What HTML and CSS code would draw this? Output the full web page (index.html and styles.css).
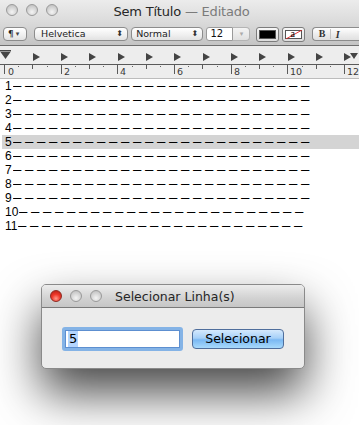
FILE: index.html
```html
<!DOCTYPE html>
<html>
<head>
<meta charset="utf-8">
<link rel="stylesheet" href="styles.css">
</head>
<body>
<div class="window">
  <div class="chrome">
    <div class="titlebar">
      <div class="lights">
        <span class="light gray"></span>
        <span class="light gray"></span>
        <span class="light gray"></span>
      </div>
      <div class="title">Sem Título <span class="dim">— Editado</span></div>
    </div>
    <div class="toolbar">
      <div class="ctl para">¶<span class="tri">▾</span></div>
      <div class="ctl popup font">Helvetica<span class="updown">⬍</span></div>
      <div class="ctl popup style">Normal<span class="updown">⬍</span></div>
      <div class="sizebox"><span class="size">12</span><span class="sizedrop">▾</span></div>
      <div class="well black"><span></span></div>
      <div class="well none"><span><svg width="20" height="10" viewBox="0 0 20 10"><line x1="1" y1="10" x2="19" y2="0" stroke="#e02020" stroke-width="1"/></svg><i>a</i></span></div>
      <div class="seg"><span class="b">B</span><span class="i">I</span></div>
    </div>
  </div>
  <div class="ruler">
    <svg width="359" height="32" viewBox="0 0 359 32">
      <rect x="0" y="0" width="359" height="32" fill="#ededed"/>
      <line x1="0" y1="18.5" x2="359" y2="18.5" stroke="#5a5a5a"/>
      <rect x="0" y="4" width="11" height="1.5" fill="#444"/>
      <polygon points="0.5,6 10.5,6 5.5,13" fill="#444"/>
      <g fill="#444">
        <polygon points="33,7 33,15 40,11"/>
        <polygon points="61,7 61,15 68,11"/>
        <polygon points="89,7 89,15 96,11"/>
        <polygon points="118,7 118,15 125,11"/>
        <polygon points="146,7 146,15 153,11"/>
        <polygon points="174,7 174,15 181,11"/>
        <polygon points="203,7 203,15 210,11"/>
        <polygon points="231,7 231,15 238,11"/>
        <polygon points="259,7 259,15 266,11"/>
        <polygon points="288,7 288,15 295,11"/>
        <polygon points="316,7 316,15 323,11"/>
        <polygon points="344,7 344,15 351,11"/>
        <polygon points="350,7 358,7 354,13"/>
      </g>
      <g stroke="#5a5a5a" stroke-width="1">
        <line x1="4.5" y1="18" x2="4.5" y2="28"/>
        <line x1="61.5" y1="18" x2="61.5" y2="28"/>
        <line x1="117.5" y1="18" x2="117.5" y2="28"/>
        <line x1="174.5" y1="18" x2="174.5" y2="28"/>
        <line x1="231.5" y1="18" x2="231.5" y2="28"/>
        <line x1="287.5" y1="18" x2="287.5" y2="28"/>
        <line x1="344.5" y1="18" x2="344.5" y2="28"/>
        <line x1="32.5" y1="18" x2="32.5" y2="23"/>
        <line x1="89.5" y1="18" x2="89.5" y2="23"/>
        <line x1="146.5" y1="18" x2="146.5" y2="23"/>
        <line x1="202.5" y1="18" x2="202.5" y2="23"/>
        <line x1="259.5" y1="18" x2="259.5" y2="23"/>
        <line x1="316.5" y1="18" x2="316.5" y2="23"/>
      </g>
      <g fill="#666">
        <rect x="18" y="20" width="1" height="1"/>
        <rect x="47" y="20" width="1" height="1"/>
        <rect x="75" y="20" width="1" height="1"/>
        <rect x="103" y="20" width="1" height="1"/>
        <rect x="132" y="20" width="1" height="1"/>
        <rect x="160" y="20" width="1" height="1"/>
        <rect x="188" y="20" width="1" height="1"/>
        <rect x="217" y="20" width="1" height="1"/>
        <rect x="245" y="20" width="1" height="1"/>
        <rect x="273" y="20" width="1" height="1"/>
        <rect x="302" y="20" width="1" height="1"/>
        <rect x="330" y="20" width="1" height="1"/>
      </g>
      <g class="rnum" fill="#3a3a3a">
        <text x="8" y="29">0</text>
        <text x="64" y="29">2</text>
        <text x="120" y="29">4</text>
        <text x="177" y="29">6</text>
        <text x="234" y="29">8</text>
        <text x="290" y="29">10</text>
        <text x="347" y="29">12</text>
      </g>
    </svg>
  </div>
  <div class="doc">
    <div class="line"><span class="n">1</span><span class="d">–––––––––––––––––––––––––</span></div>
    <div class="line"><span class="n">2</span><span class="d">–––––––––––––––––––––––––</span></div>
    <div class="line"><span class="n">3</span><span class="d">–––––––––––––––––––––––––</span></div>
    <div class="line"><span class="n">4</span><span class="d">–––––––––––––––––––––––––</span></div>
    <div class="line sel"><span class="n">5</span><span class="d">–––––––––––––––––––––––––</span></div>
    <div class="line"><span class="n">6</span><span class="d">–––––––––––––––––––––––––</span></div>
    <div class="line"><span class="n">7</span><span class="d">–––––––––––––––––––––––––</span></div>
    <div class="line"><span class="n">8</span><span class="d">–––––––––––––––––––––––––</span></div>
    <div class="line"><span class="n">9</span><span class="d">–––––––––––––––––––––––––</span></div>
    <div class="line"><span class="n">10</span><span class="d">––––––––––––––––––––––––</span></div>
    <div class="line"><span class="n">11</span><span class="d">––––––––––––––––––––––––</span></div>
  </div>
</div>

<div class="dialog">
  <div class="dtitlebar">
    <div class="lights">
      <span class="light red"></span>
      <span class="light gray"></span>
      <span class="light gray"></span>
    </div>
    <div class="dtitle">Selecionar Linha(s)</div>
  </div>
  <div class="dbody">
    <div class="field"><span class="selected">5</span></div>
    <div class="button">Selecionar</div>
  </div>
</div>
</body>
</html>
```

FILE: styles.css
```css
html, body {
  margin: 0;
  padding: 0;
}
body {
  width: 359px;
  height: 425px;
  overflow: hidden;
  background: #ffffff;
  font-family: "DejaVu Sans", "Liberation Sans", sans-serif;
  position: relative;
}
.window {
  width: 359px;
}
.chrome {
  height: 45px;
  background: linear-gradient(#ececec 0%, #dcdcdc 45%, #c4c4c4 100%);
  border-bottom: 1px solid #6f6f6f;
}
.titlebar {
  height: 22px;
  position: relative;
  display: flex;
  align-items: center;
  justify-content: center;
}
.lights {
  position: absolute;
  left: 6px;
  top: 4px;
  display: flex;
  gap: 8px;
}
.light {
  width: 12px;
  height: 12px;
  border-radius: 50%;
  box-sizing: border-box;
}
.light.gray {
  background: radial-gradient(circle at 50% 70%, #f4f4f4 0%, #d6d6d6 50%, #b8b8b8 100%);
  border: 1px solid #9a9a9a;
}
.light.red {
  background: radial-gradient(circle at 50% 75%, #ff9a8a 0%, #f0392b 45%, #b01c10 100%);
  border: 1px solid #8e2a22;
}
.title {
  font-size: 13px;
  color: #262626;
  padding-top: 1px;
  padding-left: 4px;
  letter-spacing: -0.2px;
}
.title .dim {
  color: #7b7b7b;
}
.toolbar {
  height: 23px;
  display: flex;
  align-items: flex-start;
  padding-top: 5px;
  box-sizing: border-box;
  padding-left: 3px;
}
.ctl {
  height: 14px;
  box-sizing: border-box;
  border: 1px solid #8c8c8c;
  border-radius: 4px;
  background: linear-gradient(#ffffff, #f0f0f0 55%, #e2e2e2);
  font-size: 9.5px;
  line-height: 12px;
  color: #222;
  display: flex;
  align-items: center;
  padding-left: 4px;
  position: relative;
}
.para {
  width: 25px;
  font-size: 9px;
}
.para .tri {
  font-size: 7px;
  margin-left: 2px;
  color: #444;
}
.font {
  margin-left: 7px;
  width: 99px;
  padding-left: 6px;
}
.style {
  margin-left: 3px;
  width: 76px;
  padding-left: 4px;
}
.updown {
  position: absolute;
  right: 4px;
  top: 0;
  font-size: 8px;
  color: #333;
}
.sizebox {
  margin-left: 3px;
  display: flex;
  height: 14px;
}
.size {
  width: 27px;
  height: 14px;
  box-sizing: border-box;
  border: 1px solid #9a9a9a;
  border-radius: 3px 0 0 3px;
  background: #fff;
  font-size: 10px;
  line-height: 12px;
  padding-left: 3px;
  color: #111;
}
.sizedrop {
  width: 17px;
  height: 14px;
  box-sizing: border-box;
  border: 1px solid #b4b4b4;
  border-left: none;
  border-radius: 0 4px 4px 0;
  background: linear-gradient(#f4f4f4, #e0e0e0);
  font-size: 7px;
  color: #aaa;
  text-align: center;
  line-height: 12px;
}
.well {
  width: 23px;
  height: 15px;
  box-sizing: border-box;
  border: 1px solid #7c7c7c;
  border-radius: 3px;
  background: linear-gradient(#f8f8f8, #dcdcdc);
  padding: 2px;
  margin-left: 6px;
}
.well span {
  display: block;
  width: 100%;
  height: 100%;
  box-sizing: border-box;
  border: 1px solid #555;
  position: relative;
}
.well.black span {
  background: #000;
}
.well.none {
  margin-left: 3px;
  width: 24px;
}
.well.none span {
  background: #fff;
}
.well.none svg {
  position: absolute;
  left: -1px;
  top: -1px;
  width: 18px;
  height: 9px;
}
.well.none i {
  position: absolute;
  left: 5px;
  top: -2px;
  font-family: "Liberation Serif", serif;
  font-size: 10px;
  line-height: 10px;
  font-style: normal;
  color: #000;
}
.seg {
  margin-left: 7px;
  height: 14px;
  width: 50px;
  box-sizing: border-box;
  border: 1px solid #8c8c8c;
  border-right: none;
  border-radius: 4px 0 0 4px;
  background: linear-gradient(#ffffff, #ececec 55%, #e0e0e0);
  display: flex;
  align-items: center;
  font-family: "Liberation Serif", serif;
  font-size: 10px;
  color: #333;
}
.seg .b {
  font-weight: bold;
  width: 15px;
  text-align: center;
  border-right: 1px solid #c4c4c4;
  padding-left: 2px;
  line-height: 10px;
}
.seg .i {
  font-style: italic;
  font-weight: bold;
  width: 14px;
  text-align: center;
}
.ruler {
  height: 32px;
  border-bottom: 1px solid #bcbcbc;
}
.ruler svg {
  display: block;
}
.rnum text {
  font-family: "DejaVu Sans", sans-serif;
  font-size: 9.5px;
}
.line {
  height: 14px;
  display: flex;
  align-items: center;
  font-family: "Liberation Sans", Arial, sans-serif;
  font-size: 12px;
  line-height: 14px;
  color: #000;
  padding-left: 5px;
  white-space: nowrap;
}
.line.sel {
  background: #d4d4d4;
  margin-left: 2px;
  padding-left: 3px;
}
.line .n {
  display: block;
  height: 14px;
}
.line .d {
  display: block;
  height: 14px;
  margin-left: 1px;
  letter-spacing: 2.93px;
  transform: scaleX(1.25);
  transform-origin: 0 50%;
}
.dialog {
  position: absolute;
  left: 41px;
  top: 284px;
  width: 264px;
  height: 85px;
  box-sizing: border-box;
  border: 1px solid #8a8a8a;
  border-radius: 5px;
  background: #ececec;
  box-shadow: 0 24px 48px rgba(0, 0, 0, 0.72);
  overflow: hidden;
}
.dtitlebar {
  height: 22px;
  position: relative;
  background: linear-gradient(#ececec, #d2d2d2 60%, #c6c6c6);
  border-bottom: 1px solid #7a7a7a;
  display: flex;
  align-items: center;
}
.dtitlebar .lights {
  left: 8px;
  top: 5px;
}
.dtitle {
  margin-left: 73px;
  font-size: 12.5px;
  color: #262626;
  padding-top: 1px;
}
.dbody {
  display: flex;
  align-items: center;
  padding-left: 20px;
  padding-top: 19px;
}
.field {
  width: 121px;
  height: 24px;
  box-sizing: border-box;
  border: 3px solid #84b3e6;
  border-radius: 3px;
  background: #fff;
  box-shadow: inset 0 0 0 1px #5d8fd0;
  padding: 1px 3px;
  font-size: 13px;
  line-height: 16px;
  color: #000;
}
.selected {
  background: #b4d5fe;
  display: inline-block;
  padding: 0 1px;
  line-height: 16px;
}
.button {
  margin-left: 9px;
  width: 92px;
  height: 20px;
  box-sizing: border-box;
  border: 1px solid #4f6e9c;
  border-radius: 4px;
  background: linear-gradient(#d5e9fd 0%, #a6d0f8 45%, #7ab8f3 55%, #a8dafc 100%);
  font-size: 12.5px;
  line-height: 18px;
  text-align: center;
  color: #000;
}
```
